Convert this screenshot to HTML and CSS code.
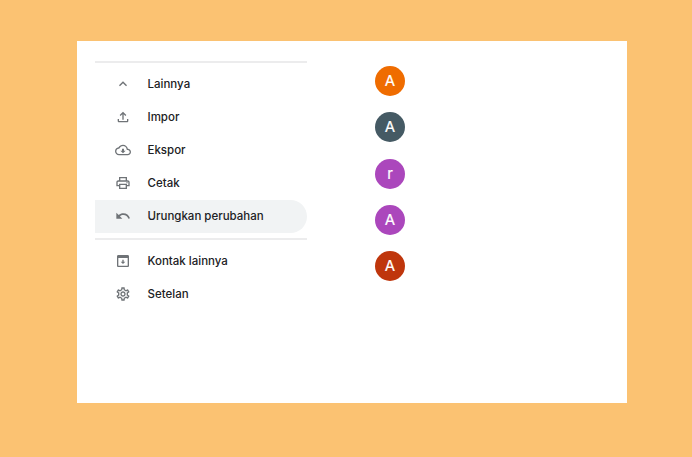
FILE: index.html
```html
<!DOCTYPE html>
<html lang="id">
<head>
<meta charset="utf-8">
<title>Kontak</title>
<link rel="stylesheet" href="styles.css">
</head>
<body>
<main class="panel">
  <nav class="menu">
    <hr class="rule rule-top">
    <div class="item">
      <svg class="icon" viewBox="0 0 24 24"><path d="M12 8l-6 6 1.41 1.41L12 10.83l4.59 4.58L18 14z"/></svg>
      <span>Lainnya</span>
    </div>
    <div class="item">
      <svg class="icon" viewBox="0 0 24 24"><path d="M18 15v3H6v-3H4v3c0 1.1.9 2 2 2h12c1.1 0 2-.9 2-2v-3h-2zM7 9l1.41 1.41L11 7.83V16h2V7.83l2.59 2.58L17 9l-5-5-5 5z"/></svg>
      <span>Impor</span>
    </div>
    <div class="item">
      <svg class="icon" viewBox="0 0 24 24"><path d="M19.35 10.04C18.67 6.59 15.64 4 12 4 9.11 4 6.6 5.64 5.35 8.04 2.34 8.36 0 10.91 0 14c0 3.31 2.69 6 6 6h13c2.76 0 5-2.24 5-5 0-2.64-2.05-4.78-4.65-4.96zM19 18H6c-2.21 0-4-1.79-4-4 0-2.05 1.53-3.76 3.56-3.97l1.07-.11.5-.95C8.08 7.14 9.94 6 12 6c2.62 0 4.88 1.86 5.39 4.43l.3 1.5 1.53.11c1.56.1 2.78 1.41 2.78 2.96 0 1.65-1.35 3-3 3zm-5.55-8h-2.9v3H8l4 4 4-4h-2.55z"/></svg>
      <span>Ekspor</span>
    </div>
    <div class="item">
      <svg class="icon" viewBox="0 0 24 24"><path d="M19 8h-1V3H6v5H5c-1.66 0-3 1.34-3 3v6h4v4h12v-4h4v-6c0-1.66-1.34-3-3-3zM8 5h8v3H8V5zm8 14H8v-4h8v4zm2-4v-2H6v2H4v-4c0-.55.45-1 1-1h14c.55 0 1 .45 1 1v4h-2z"/><circle cx="18" cy="11.5" r="1"/></svg>
      <span>Cetak</span>
    </div>
    <div class="item item-active">
      <svg class="icon" viewBox="0 0 24 24"><path d="M12.5 8c-2.65 0-5.05.99-6.9 2.6L2 7v9h9l-3.62-3.62c1.39-1.16 3.16-1.88 5.12-1.88 3.54 0 6.55 2.31 7.6 5.5l2.37-.78C21.08 11.03 17.15 8 12.5 8z"/></svg>
      <span>Urungkan perubahan</span>
    </div>
    <hr class="rule rule-mid">
    <div class="item">
      <svg class="icon" viewBox="0 0 24 24"><path d="M19 3H5c-1.1 0-2 .9-2 2v14c0 1.1.9 2 2 2h14c1.1 0 2-.9 2-2V5c0-1.1-.9-2-2-2zm0 16H5V7.5h14V19z"/><path d="M13 10h-2v3H8.5l3.5 3.5 3.5-3.5H13z"/></svg>
      <span>Kontak lainnya</span>
    </div>
    <div class="item">
      <svg class="icon" viewBox="0 0 24 24"><path d="M19.43 12.98c.04-.32.07-.64.07-.98s-.03-.66-.07-.98l2.11-1.65c.19-.15.24-.42.12-.64l-2-3.46c-.12-.22-.39-.3-.61-.22l-2.49 1c-.52-.4-1.08-.73-1.69-.98l-.38-2.65C14.46 2.18 14.25 2 14 2h-4c-.25 0-.46.18-.49.42l-.38 2.65c-.61.25-1.17.59-1.69.98l-2.49-1c-.23-.09-.49 0-.61.22l-2 3.46c-.13.22-.07.49.12.64l2.11 1.65c-.04.32-.07.65-.07.98s.03.66.07.98l-2.11 1.65c-.19.15-.24.42-.12.64l2 3.46c.12.22.39.3.61.22l2.49-1c.52.4 1.08.73 1.69.98l.38 2.65c.03.24.24.42.49.42h4c.25 0 .46-.18.49-.42l.38-2.65c.61-.25 1.17-.59 1.69-.98l2.49 1c.23.09.49 0 .61-.22l2-3.46c.12-.22.07-.49-.12-.64l-2.11-1.65zM17.45 11.27c.04.31.05.52.05.73 0 .21-.02.43-.05.73l-.14 1.13.89.7 1.08.84-.7 1.21-1.27-.51-1.04-.42-.9.68c-.43.32-.84.56-1.25.73l-1.06.43-.16 1.13-.2 1.35h-1.4l-.19-1.35-.16-1.13-1.06-.43c-.43-.18-.83-.41-1.23-.71l-.91-.7-1.06.43-1.27.51-.7-1.21 1.08-.84.89-.7-.14-1.13c-.03-.31-.05-.54-.05-.74s.02-.43.05-.73l.14-1.13-.89-.7-1.08-.84.7-1.21 1.27.51 1.04.42.9-.68c.43-.32.84-.56 1.25-.73l1.06-.43.16-1.13.2-1.35h1.39l.19 1.35.16 1.13 1.06.43c.43.18.83.41 1.23.71l.91.7 1.06-.43 1.27-.51.7 1.21-1.07.85-.89.7.14 1.13zM12 8c-2.21 0-4 1.79-4 4s1.79 4 4 4 4-1.79 4-4-1.79-4-4-4zm0 6c-1.1 0-2-.9-2-2s.9-2 2-2 2 .9 2 2-.9 2-2 2z"/></svg>
      <span>Setelan</span>
    </div>
  </nav>
  <section class="avatars">
    <div class="avatar avatar-orange">A</div>
    <div class="avatar avatar-slate">A</div>
    <div class="avatar avatar-purple">r</div>
    <div class="avatar avatar-purple">A</div>
    <div class="avatar avatar-rust">A</div>
  </section>
</main>
</body>
</html>
```

FILE: styles.css
```css
html, body {
  margin: 0;
  height: 100%;
}
body {
  background: #fbc272;
  padding: 41px 65px 54px 77px;
  box-sizing: border-box;
  font-family: "Inter", "Liberation Sans", sans-serif;
}
.panel {
  background: #fff;
  height: 362px;
  padding: 20px 0 0 18px;
  box-sizing: border-box;
  display: flex;
}
.menu {
  width: 212px;
  flex: none;
}
.rule {
  border: 0;
  margin: 0;
  height: 2px;
  background: #ececed;
}
.rule-top {
  margin-bottom: 5px;
}
.rule-mid {
  margin: 5px 0;
}
.item {
  height: 33px;
  box-sizing: border-box;
  padding-bottom: 1px;
  display: flex;
  align-items: center;
  font-size: 11.5px;
  font-weight: 500;
  color: #202124;
  border-radius: 0 17px 17px 0;
}
.item-active {
  background: #f1f3f4;
}
.icon {
  width: 16px;
  height: 16px;
  margin: 0 16.5px 0 20px;
  fill: #6f7377;
  flex: none;
}
.avatars {
  margin-left: 68px;
  padding-top: 5px;
  display: flex;
  flex-direction: column;
  gap: 16.25px;
}
.avatar {
  width: 30px;
  height: 30px;
  border-radius: 50%;
  color: #fff;
  font-size: 15px;
  font-weight: 400;
  -webkit-text-stroke: 0.2px #fff;
  line-height: 30px;
  text-align: center;
}
.avatar-orange { background: #ef6c00; }
.avatar-slate { background: #455a64; }
.avatar-purple { background: #ab47bc; }
.avatar-rust { background: #bf360c; }
```
